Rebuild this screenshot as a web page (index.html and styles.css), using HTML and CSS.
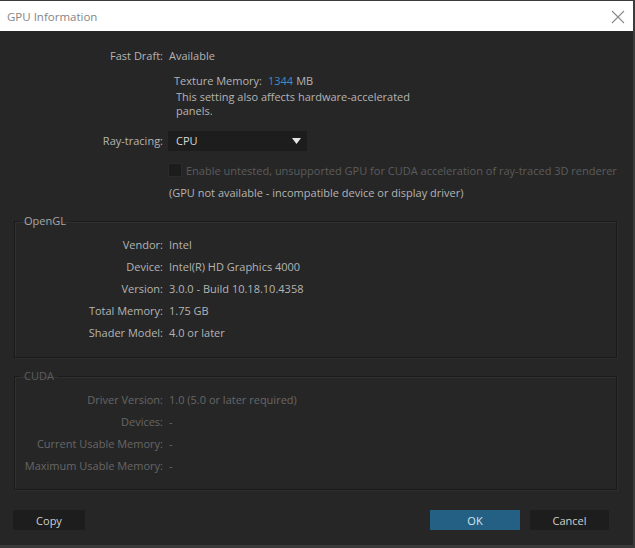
FILE: index.html
```html
<!DOCTYPE html>
<html>
<head>
<meta charset="utf-8">
<title>GPU Information</title>
<link rel="stylesheet" href="styles.css">
</head>
<body>
<div class="window">
  <div class="titlebar">
    <span class="title">GPU Information</span>
    <svg class="close" width="14" height="14" viewBox="0 0 14 14"><path d="M1 1L13 13M13 1L1 13" stroke="#8a8a8a" stroke-width="1.1" fill="none"/></svg>
  </div>
  <div class="content">
    <div class="row">
      <span class="label">Fast Draft:</span>
      <span class="value">Available</span>
    </div>
    <div class="texture">Texture Memory:<span class="num">1344</span>MB</div>
    <div class="note">This setting also affects hardware-accelerated<br>panels.</div>
    <div class="row ray">
      <span class="label">Ray-tracing:</span>
      <div class="select"><span>CPU</span><svg width="9" height="6" viewBox="0 0 9 6"><path d="M0 0H9L4.5 6Z" fill="#e6e6e6"/></svg></div>
    </div>
    <div class="check-row">
      <span class="checkbox"></span>
      <span class="disabled">Enable untested, unsupported GPU for CUDA acceleration of ray-traced 3D renderer</span>
    </div>
    <div class="gpu-note">(GPU not available - incompatible device or display driver)</div>

    <fieldset class="group">
      <legend>OpenGL</legend>
      <div class="grow"><span class="glabel">Vendor:</span><span class="value">Intel</span></div>
      <div class="grow"><span class="glabel">Device:</span><span class="value">Intel(R) HD Graphics 4000</span></div>
      <div class="grow"><span class="glabel">Version:</span><span class="value">3.0.0 - Build 10.18.10.4358</span></div>
      <div class="grow"><span class="glabel">Total Memory:</span><span class="value">1.75 GB</span></div>
      <div class="grow"><span class="glabel">Shader Model:</span><span class="value">4.0 or later</span></div>
    </fieldset>

    <fieldset class="group cuda">
      <legend>CUDA</legend>
      <div class="grow"><span class="glabel">Driver Version:</span><span class="value">1.0 (5.0 or later required)</span></div>
      <div class="grow"><span class="glabel">Devices:</span><span class="value">-</span></div>
      <div class="grow"><span class="glabel">Current Usable Memory:</span><span class="value">-</span></div>
      <div class="grow"><span class="glabel">Maximum Usable Memory:</span><span class="value">-</span></div>
    </fieldset>

    <div class="buttons">
      <button class="btn copy">Copy</button>
      <div class="spacer"></div>
      <button class="btn ok">OK</button>
      <button class="btn cancel">Cancel</button>
    </div>
  </div>
</div>
</body>
</html>
```

FILE: styles.css
```css
html, body {
  margin: 0;
  padding: 0;
  background: #262626;
}
body {
  font-family: "Open Sans", "Noto Sans", "Liberation Sans", sans-serif;
  font-size: 11px;
  color: #b4b4b4;
}
.window {
  width: 635px;
  height: 548px;
  box-sizing: border-box;
  border-top: 1px solid #3a3a3a;
  border-right: 2px solid #3c3c3c;
  border-bottom: 3px solid #3a3a3a;
  background: #262626;
  overflow: hidden;
}
.titlebar {
  height: 30px;
  background: #ffffff;
  display: flex;
  align-items: center;
  justify-content: space-between;
  padding: 0 8px 0 7px;
}
.title {
  font-size: 11.5px;
  color: #858585;
}
.close {
  margin-top: 1px;
}
.content {
  padding: 17px 14px 0 14px;
}
.row {
  display: flex;
  align-items: center;
  height: 16px;
  line-height: 16px;
}
.label {
  width: 149px;
  text-align: right;
  flex: none;
}
.value {
  margin-left: 6px;
  white-space: nowrap;
}
.texture {
  margin: 9px 0 0 160px;
  height: 16px;
  line-height: 16px;
}
.num {
  color: #3a8cc4;
  margin: 0 3px 0 6px;
}
.note {
  margin: 1px 0 0 162px;
  line-height: 14px;
}
.ray {
  margin-top: 13px;
  height: 20px;
}
.select {
  margin-left: 5px;
  width: 139px;
  height: 20px;
  background: #1d1d1d;
  box-sizing: border-box;
  padding: 0 6px 0 8px;
  display: flex;
  align-items: center;
  justify-content: space-between;
  color: #d8d8d8;
}
.check-row {
  margin: 11px 0 0 154px;
  display: flex;
  align-items: center;
  height: 16px;
}
.checkbox {
  width: 14px;
  height: 14px;
  background: #1c1c1c;
  box-sizing: border-box;
  border: 1px solid #2a2a2a;
  margin-right: 4px;
}
.disabled {
  color: #5c5c5c;
  white-space: nowrap;
}
.gpu-note {
  margin: 7px 0 0 155px;
  height: 16px;
  line-height: 16px;
}
.group {
  margin: 12px 2px 0 0;
  padding: 5px 0 13px 0;
  border: 1px solid #1a1a1a;
  box-shadow: inset 1px 1px 0 #303030, 1px 1px 0 #2e2e2e;
  min-width: 0;
}
.group legend {
  margin-left: 5px;
  padding: 0 4px;
  line-height: 16px;
  color: #a8a8a8;
}
.grow {
  display: flex;
  height: 22px;
  line-height: 22px;
}
.glabel {
  width: 148px;
  text-align: right;
  flex: none;
}
.cuda {
  margin-top: 10px;
  padding: 5px 0 12px 0;
  color: #666666;
}
.cuda legend {
  color: #5e5e5e;
}
.buttons {
  display: flex;
  margin: 20px 10px 0 -1px;
}
.spacer {
  flex: 1;
}
.btn {
  height: 20px;
  border: none;
  font-family: inherit;
  font-size: 11px;
  color: #cfcfcf;
  background: #1d1d1d;
  padding: 0;
}
.copy { width: 72px; }
.ok {
  width: 90px;
  background: #236084;
  color: #d8e4ec;
  margin-right: 10px;
}
.cancel { width: 79px; }
```
